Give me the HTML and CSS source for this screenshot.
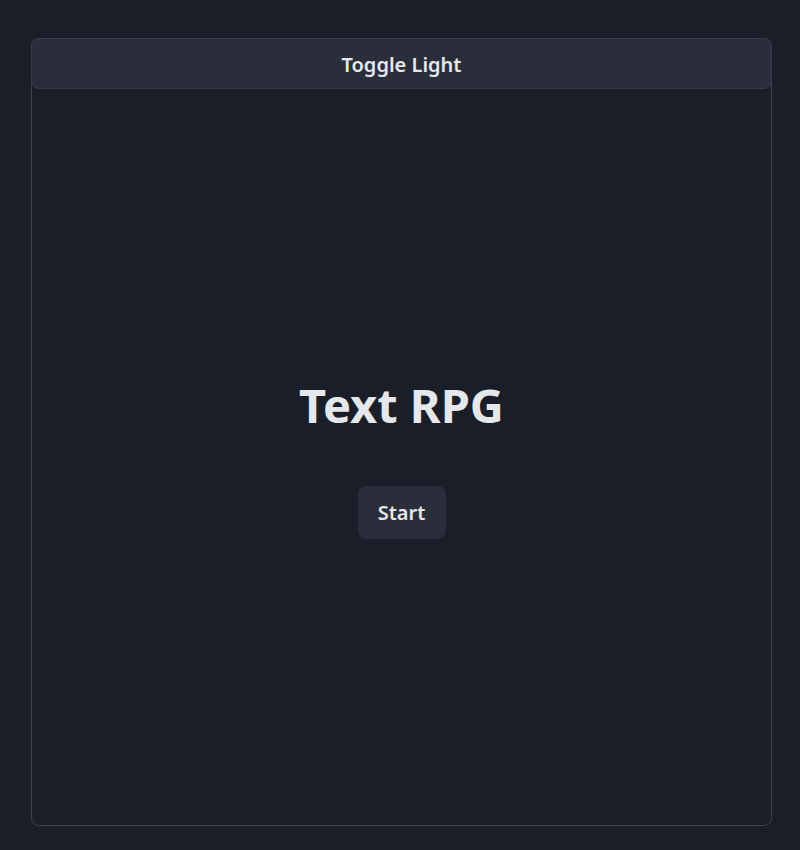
FILE: index.html
```html
<!DOCTYPE html>
<html lang="en">
<head>
<meta charset="utf-8">
<title>Text RPG</title>
<link rel="stylesheet" href="styles.css">
</head>
<body>
<div class="app">
  <button class="toggle">Toggle Light</button>
  <main class="screen">
    <h1 class="title">Text RPG</h1>
    <button class="start">Start</button>
  </main>
</div>
</body>
</html>
```
FILE: styles.css
```css
html, body {
  margin: 0;
  padding: 0;
  background: #1a1e29;
  font-family: "Noto Sans", "Open Sans", "Liberation Sans", sans-serif;
  color: #e5e7eb;
}
body {
  padding: 38px 28px 24px 31px;
}
.app {
  width: 739px;
  height: 786px;
  border: 1px solid #3d414d;
  border-radius: 8px;
  display: flex;
  flex-direction: column;
}
.toggle {
  margin: -1px -1px 0 -1px;
  height: 51px;
  padding-top: 2px;
  background: #2a2e3a;
  border: 1px solid #363b47;
  border-radius: 8px;
  color: #e5e7eb;
  font-family: inherit;
  font-size: 20px;
  font-weight: 600;
  cursor: pointer;
}
.screen {
  flex: 1;
  display: flex;
  flex-direction: column;
  align-items: center;
  justify-content: center;
  padding-top: 2px;
}
.title {
  margin: 0 0 52px 0;
  font-size: 47px;
  font-weight: 700;
  line-height: 1.2;
  color: #e5e7eb;
}
.start {
  width: 88px;
  height: 53px;
  padding-top: 2px;
  background: #2a2e3a;
  border: none;
  border-radius: 8px;
  color: #e5e7eb;
  font-family: inherit;
  font-size: 20px;
  font-weight: 600;
  cursor: pointer;
}
```
